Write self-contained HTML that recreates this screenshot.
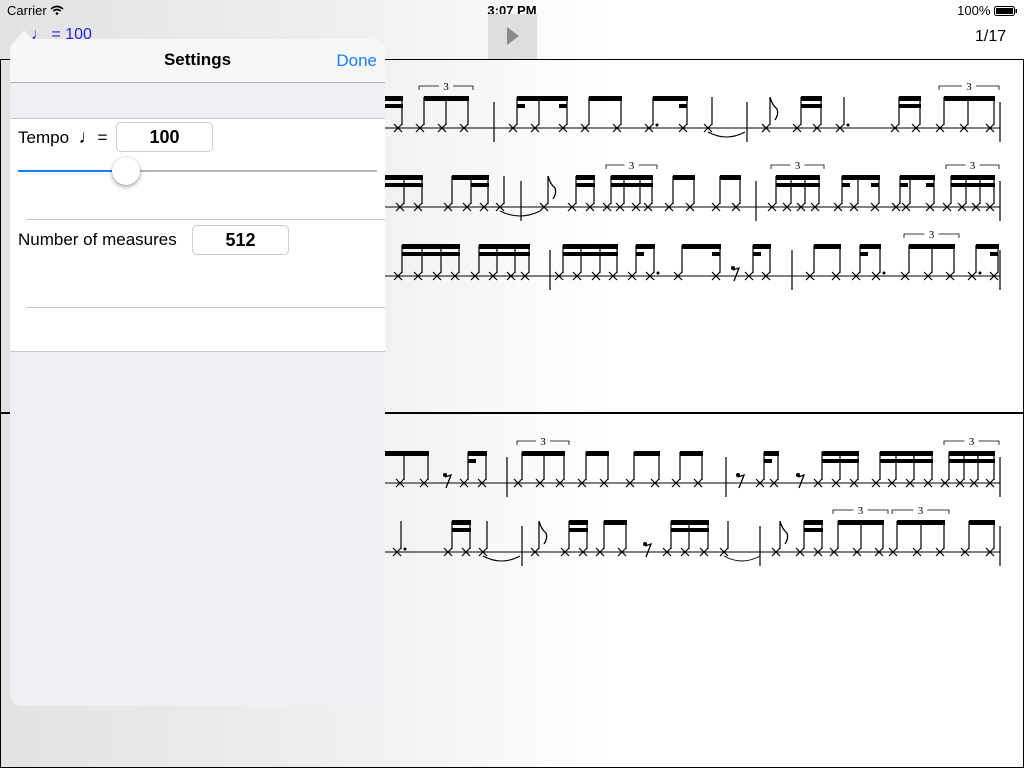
<!DOCTYPE html>
<html><head><meta charset="utf-8"><style>
*{margin:0;padding:0;box-sizing:border-box}
body{width:1024px;height:768px;overflow:hidden;position:relative;font-family:"Liberation Sans",sans-serif;background:linear-gradient(to right,#e2e2e2 0%,#f0f0f0 35%,#fff 60%,#fff 100%)}
.abs{position:absolute}
#panel{left:10px;top:39px;width:375px;height:667px;border-radius:12px;background:#efeff4;overflow:hidden}
</style></head><body>
<div class="abs" style="left:7px;top:3px;font-size:13px;color:#000">Carrier <svg width="14" height="10" viewBox="0 0 14 10" style="vertical-align:0"><path d="M1 4 Q7 -1 13 4" stroke="#000" stroke-width="1.6" fill="none"/><path d="M3.3 6 Q7 3 10.7 6" stroke="#000" stroke-width="1.6" fill="none"/><circle cx="7" cy="8.5" r="1.3"/></svg></div>
<div class="abs" style="left:0;width:1024px;top:3px;text-align:center;font-size:13px;font-weight:bold">3:07 PM</div>
<div class="abs" style="right:6px;top:3px;font-size:13px">100% <svg width="24" height="10" style="vertical-align:-1px"><rect x="0.5" y="0.5" width="20" height="9" rx="2" fill="none" stroke="#000"/><rect x="2" y="2" width="17" height="6" fill="#000"/><rect x="21.5" y="3" width="1.5" height="4" fill="#000"/></svg></div>
<div class="abs" style="left:31px;top:26px;font-size:16px;color:#2222dd">♩ = 100</div>
<div class="abs" style="left:488px;top:14px;width:49px;height:45px;background:#dedede"><svg width="49" height="45"><path d="M19 13 L31 22 L19 31Z" fill="#8a8a8a"/></svg></div>
<div class="abs" style="left:975px;top:28px;font-size:16px">1/17</div>
<svg class="abs" style="left:0;top:0" width="1024" height="768" id="mus">
<rect x="0.5" y="59.5" width="1023" height="708" fill="none" stroke="#000"/>
<line x1="0" y1="413" x2="1024" y2="413" stroke="#000" stroke-width="2"/>
</svg>
<div id="panel" class="abs">
 <div class="abs" style="left:0;top:0;width:375px;height:44px;background:#f7f7f7;border-bottom:1px solid #b2b2b2"></div>
 <div class="abs" style="left:0;top:11px;width:375px;text-align:center;font-size:17px;font-weight:bold">Settings</div>
 <div class="abs" style="right:8px;top:12px;font-size:17px;color:#157efb">Done</div>
 <div class="abs" style="left:0;top:79px;width:375px;height:234px;background:#fff;border-top:1px solid #c8c7cc;border-bottom:1px solid #c8c7cc"></div>
 <div class="abs" style="left:8px;top:88px;font-size:17px">Tempo&nbsp;&nbsp;<span style="font-size:19px">♩</span>=</div>
 <div class="abs" style="left:106px;top:83px;width:97px;height:30px;border:1px solid #ccc;border-radius:5px;text-align:center;font-size:18px;font-weight:bold;line-height:28px">100</div>
 <div class="abs" style="left:8px;top:131px;width:109px;height:2px;background:#157efb"></div>
 <div class="abs" style="left:117px;top:131px;width:250px;height:2px;background:#b7b7b7"></div>
 <div class="abs" style="left:102px;top:118px;width:28px;height:28px;border-radius:50%;background:#fff;box-shadow:0 2px 4px rgba(0,0,0,.35),0 0 1px rgba(0,0,0,.3)"></div>
 <div class="abs" style="left:16px;top:180px;width:359px;height:1px;background:#c8c7cc"></div>
 <div class="abs" style="left:8px;top:191px;font-size:17px">Number of measures</div>
 <div class="abs" style="left:182px;top:186px;width:97px;height:30px;border:1px solid #ccc;border-radius:5px;text-align:center;font-size:18px;font-weight:bold;line-height:28px">512</div>
 <div class="abs" style="left:16px;top:268px;width:359px;height:1px;background:#c8c7cc"></div>
</div>
<svg class="abs" style="left:16px;top:28px" width="16" height="12"><path d="M0 12 L8 2 L16 12Z" fill="#f7f7f7"/></svg>
<script>
var s=document.getElementById('mus'),h='';
function L(a,b,c,d,w){h+='<line x1="'+a+'" y1="'+b+'" x2="'+c+'" y2="'+d+'" stroke="#000" stroke-width="'+(w||1)+'"/>';}
function X(x,y){L(x-4,y-4,x+4,y+4,1.2);L(x-4,y+4,x+4,y-4,1.2);}
function st(x,y){X(x,y);L(x+4,y-3,x+4,y-31,1.2);}
function grp(xs,y,d,trip){xs.forEach(function(x){st(x,y)});var a=xs[0]+4,b=xs[xs.length-1]+4;h+='<rect x="'+a+'" y="'+(y-32)+'" width="'+(b-a+1)+'" height="5"/>';if(d)h+='<rect x="'+a+'" y="'+(y-24)+'" width="'+(b-a+1)+'" height="4"/>';if(trip){var m=(a+b)/2;h+='<path d="M'+(a-5)+' '+(y-38)+'v-4H'+(m-7)+'M'+(m+7)+' '+(y-42)+'H'+(b+5)+'v4" stroke="#000" fill="none" stroke-width="0.8"/><text x="'+m+'" y="'+(y-38)+'" font-size="11" text-anchor="middle" font-family="Liberation Serif">3</text>';}}
function bar(x,y){L(x,y-26,x,y+14,1.2);}
function fl(x,y){st(x,y);h+='<path d="M'+(x+4)+' '+(y-31)+'q2 8 7 12q2 5 -2 11" stroke="#000" fill="none" stroke-width="1.3"/>';}
function q(x,y){st(x,y);}
function rest(x,y){h+='<circle cx="'+(x-2)+'" cy="'+(y-8)+'" r="2"/><path d="M'+(x-2)+' '+(y-6)+'l6 -2l-5 13" stroke="#000" fill="none" stroke-width="1.3"/>';}
function dot(x,y){h+='<circle cx="'+(x+8)+'" cy="'+(y-3)+'" r="1.5"/>';}
function tie(a,b,y){h+='<path d="M'+a+' '+(y+4)+'q'+((b-a)/2)+' 10 '+(b-a)+' 0" stroke="#000" fill="none"/>';}
var rows=[128,207,276,483,552];
rows.forEach(function(y){L(20,y,1000,y,1);bar(1000,y)});
var y=128;
grp([380,398],y,1);grp([420,442,464],y,0,1);bar(494,y);grp([513,535,563],y,0);h+='<rect x="517" y="'+(y-24)+'" width="8" height="4"/><rect x="559" y="'+(y-24)+'" width="8" height="4"/>';
grp([585,617],y);grp([649,683],y);dot(649,y);h+='<rect x="679" y="'+(y-24)+'" width="8" height="4"/>';q(708,y);tie(708,745,y);bar(747,y);fl(766,y);grp([797,817],y,1);q(840,y);dot(840,y);grp([895,916],y,1);grp([940,964,990],y,0,1);
y=207;
grp([380,400,418],y,1);grp([448,467,484],y);h+='<rect x="471" y="'+(y-24)+'" width="18" height="4"/>';q(500,y);tie(500,540,y);bar(521,y);fl(544,y);grp([572,590],y,1);grp([607,620,636,648],y,1,1);grp([669,690],y);grp([716,736],y);bar(756,y);grp([772,787,801,815],y,1,1);grp([838,854,875],y);h+='<rect x="842" y="'+(y-24)+'" width="8" height="4"/><rect x="871" y="'+(y-24)+'" width="8" height="4"/>';grp([896,906,930],y);h+='<rect x="900" y="'+(y-24)+'" width="8" height="4"/><rect x="926" y="'+(y-24)+'" width="8" height="4"/>';grp([947,962,976,990],y,1,1);
y=276;
bar(384,y);grp([398,418,437,455],y,1);grp([475,493,511,525],y,1);bar(550,y);grp([559,577,596,613],y,1);grp([632,650],y);h+='<rect x="636" y="'+(y-24)+'" width="8" height="4"/>';dot(650,y);grp([678,716],y);h+='<rect x="712" y="'+(y-24)+'" width="8" height="4"/>';rest(735,y);grp([749,766],y);h+='<rect x="753" y="'+(y-24)+'" width="8" height="4"/>';bar(792,y);grp([810,836],y);grp([856,876],y);h+='<rect x="860" y="'+(y-24)+'" width="8" height="4"/>';dot(876,y);grp([905,928,950],y,0,1);grp([972,994],y);dot(972,y);h+='<rect x="990" y="'+(y-24)+'" width="8" height="4"/>';
y=483;
grp([380,400,424],y);rest(447,y);grp([464,482],y);h+='<rect x="468" y="'+(y-24)+'" width="8" height="4"/>';bar(507,y);grp([518,540,560],y,0,1);grp([582,604],y);grp([630,655],y);grp([676,698],y);bar(726,y);rest(740,y);grp([760,774],y);h+='<rect x="764" y="'+(y-24)+'" width="8" height="4"/>';rest(800,y);grp([818,836,854],y,1);grp([876,892,910,928],y,1);grp([945,960,974,990],y,1,1);
y=552;
q(397,y);dot(397,y);grp([448,466],y,1);q(483,y);tie(483,520,y);bar(522,y);fl(535,y);grp([565,583],y,1);grp([600,622],y);rest(647,y);grp([667,685,704],y,1);q(724,y);tie(724,760,y);bar(760,y);fl(776,y);grp([800,818],y,1);grp([834,857,879],y,0,1);grp([893,917,940],y,0,1);grp([965,990],y);
s.innerHTML+=h;
</script>
</body></html>
